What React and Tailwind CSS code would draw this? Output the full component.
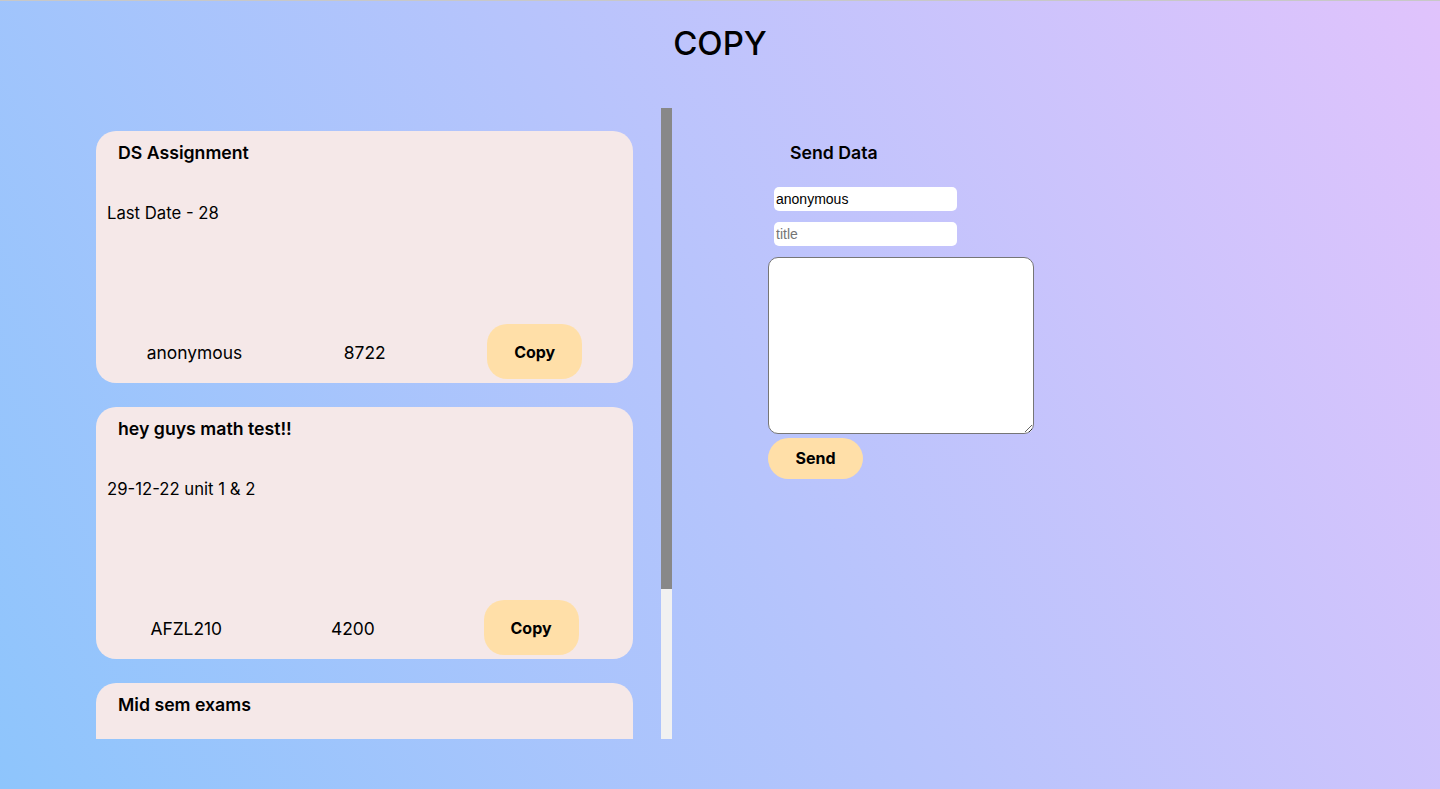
import { useState } from "react";

const notes = [
  { title: "DS Assignment", body: "Last Date - 28", user: "anonymous", code: "8722" },
  { title: "hey guys math test!!", body: "29-12-22 unit 1 & 2", user: "AFZL210", code: "4200" },
  { title: "Mid sem exams", body: "", user: "anonymous", code: "1342" },
];

function NoteCard({ note }) {
  return (
    <div className="h-[252px] w-[537px] shrink-0 flex flex-col rounded-[20px] bg-[#f5e8e8]">
      <h2 className="pl-[22px] pt-[10px] text-[17.7px] leading-6 font-semibold text-black">{note.title}</h2>
      <p className="pl-[11px] mt-[36px] text-[16.7px] leading-6 text-black">{note.body}</p>
      <div className="mt-auto pb-[4px] flex items-center justify-around">
        <span className="pt-[3px] text-[17.4px] text-black">{note.user}</span>
        <span className="pt-[3px] text-[17.4px] text-black">{note.code}</span>
        <button className="w-[95px] h-[55px] rounded-[20px] bg-[#ffdfa8] text-[16px] font-bold text-black">
          Copy
        </button>
      </div>
    </div>
  );
}

export default function App() {
  const [user, setUser] = useState("anonymous");
  const [title, setTitle] = useState("");
  const [text, setText] = useState("");

  return (
    <div
      className="min-h-screen h-[789px] border-t border-[#c8c8c8] bg-[linear-gradient(62deg,#8ec5fc_0%,#e0c3fc_100%)] overflow-hidden"
      style={{ fontFamily: "Inter, 'Noto Sans', sans-serif" }}
    >
      <h1 className="pt-[22px] text-center text-[33px] leading-[40px] font-medium text-black">COPY</h1>

      <div className="mt-[45px] flex">
        {/* notes list + scrollbar */}
        <div className="ml-[96px] w-[576px] h-[631px] flex">
          <div className="w-[565px] h-full overflow-hidden flex flex-col gap-[24px] pt-[23px]">
            {notes.map((n, i) => (
              <NoteCard key={i} note={n} />
            ))}
          </div>
          <div className="w-[11px] h-full flex flex-col bg-[#f1f1f1]">
            <div className="h-[481px] bg-[#888888]" />
          </div>
        </div>

        {/* send form */}
        <div className="ml-[96px] flex flex-col">
          <h2 className="ml-[22px] mt-[33px] text-[17.7px] leading-6 font-semibold text-black">Send Data</h2>
          <input
            value={user}
            onChange={(e) => setUser(e.target.value)}
            className="ml-[6px] mt-[22px] w-[183px] h-[24px] rounded-[5px] bg-white px-[2px] text-[14px] text-black outline-none"
            style={{ fontFamily: "'Liberation Sans', Arial, sans-serif" }}
          />
          <input
            value={title}
            placeholder="title"
            onChange={(e) => setTitle(e.target.value)}
            className="ml-[6px] mt-[11px] w-[183px] h-[24px] rounded-[5px] bg-white px-[2px] text-[14px] text-black placeholder:text-[#757575] outline-none"
            style={{ fontFamily: "'Liberation Sans', Arial, sans-serif" }}
          />
          <textarea
            value={text}
            onChange={(e) => setText(e.target.value)}
            className="mt-[11px] w-[266px] h-[177px] rounded-[10px] border border-[#767676] bg-white outline-none"
          />
          <button className="mt-[4px] w-[95px] h-[41px] rounded-full bg-[#ffdfa8] pb-[2px] text-[16px] font-bold text-black">
            Send
          </button>
        </div>
      </div>
    </div>
  );
}
